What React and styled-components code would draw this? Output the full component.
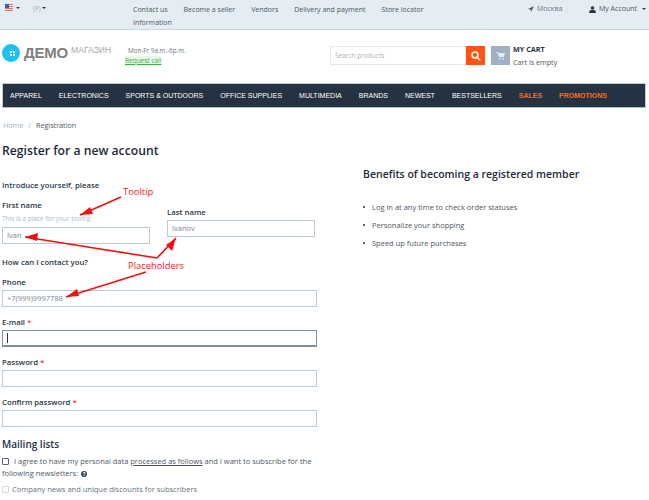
import React from "react"
import styled, { createGlobalStyle } from "styled-components"

const Global = createGlobalStyle`
html, body { margin: 0; padding: 0; background: #fff; overflow: hidden; }
body { font-family: "Open Sans", "Liberation Sans", sans-serif; color: #2a3644; width: 649px; height: 500px; }
* { box-sizing: border-box; }
`

const Page = styled.div`
position: relative;
width: 649px;
height: 500px;
overflow: hidden;
`
const TopBar = styled.div`
height: 30px;
background: #e4edf3;
border-bottom: 1px solid #c6d6e4;
display: flex;
font-size: 7px;
color: #4c5763;
`
const TopLeft = styled.div`
width: 133px;
display: flex;
align-items: flex-start;
padding: 4px 0 0 5px;
`
const Flag = styled.svg`
width: 8px;
height: 7px;
margin-top: 0;
`
const Caret = styled.span`
display: inline-block;
width: 0;
height: 0;
margin: ${p => p.$m || "3px 0 0 3px"};
border-left: 2px solid transparent;
border-right: 2px solid transparent;
border-top: 2px solid #2a3644;
`
const Currency = styled.span`
margin-left: 13px;
color: #a6afb9;
font-size: 6.5px;
line-height: 9px;
`
const TopLinks = styled.div`
width: 300px;
display: flex;
flex-wrap: wrap;
column-gap: 16px;
padding-top: 4px;
line-height: 11px;
white-space: nowrap;
`
const TopRight = styled.div`
flex: 1;
display: flex;
padding: 3px 0 0 95px;
line-height: 12px;
white-space: nowrap;
`
const City = styled.span`
display: flex;
align-items: center;
height: 12px;
gap: 3px;
width: 61px;
color: #6b7682;
`
const Account = styled.span`
display: flex;
align-items: center;
height: 12px;
gap: 3px;
`
const Header = styled.div`
height: 53px;
display: flex;
align-items: flex-start;
`
const Logo = styled.div`
width: 125px;
display: flex;
padding: 14px 0 0 2px;
`
const LogoBig = styled.span`
font-family: "Liberation Sans", sans-serif;
font-weight: 700;
font-size: 15px;
line-height: 18px;
color: #808080;
margin-left: 4px;
letter-spacing: -0.2px;
`
const LogoSmall = styled.span`
font-family: "Liberation Sans", sans-serif;
font-size: 8.6px;
line-height: 12px;
color: #a5a5a5;
margin-left: 3px;
`
const Hours = styled.div`
width: 205px;
padding-top: 16px;
font-size: 6.3px;
line-height: 10px;
color: #6b7682;
`
const HoursText = styled.div`
padding-left: 3px;
margin-bottom: 0;
`
const CallLink = styled.a`
color: #37b34a;
text-decoration: underline;
display: inline-block;
background: #e8f8e4;
font-size: 6.5px;
margin-top: 0;
`
const Search = styled.div`
margin-top: 16px;
width: 155px;
height: 19px;
display: flex;
`
const SearchInput = styled.div`
flex: 1;
border: 1px solid #e2eaf1;
font-size: 6.5px;
line-height: 17px;
padding-left: 4px;
color: #a8b2bc;
`
const SearchButton = styled.div`
width: 19px;
background: #ff5316;
display: flex;
align-items: center;
justify-content: center;
`
const Cart = styled.div`
margin-left: 6px;
margin-top: 16px;
display: flex;
gap: 3px;
`
const CartIcon = styled.div`
width: 19px;
height: 19px;
background: #9fb1c2;
display: flex;
align-items: center;
justify-content: center;
`
const CartText = styled.div`
font-size: 7.2px;
line-height: 13px;
color: #4c5763;
margin-top: -3px;
b { display: block; color: #2a3644; font-weight: 700; }
`
const Nav = styled.div`
margin: 0 3px 0 2px;
height: 25px;
background: #253241;
border: 1px solid #c9ccd0;
border-bottom-color: #b5babf;
display: flex;
align-items: center;
padding-left: 7px;
gap: 17px;
font-family: "Liberation Sans", sans-serif;
font-size: 7px;
color: #fff;
white-space: nowrap;
`
const NavItem = styled.span`
color: ${p => (p.$hot ? "#f4701c" : "#fff")};
font-weight: ${p => (p.$hot ? 700 : 400)};
`
const Crumbs = styled.div`
padding: 11px 0 0 3px;
font-size: 7.2px;
line-height: 12px;
color: #4c5763;
span { color: #9db2c6; }
i { font-style: normal; color: #9db2c6; margin: 0 5px; }
`
const Columns = styled.div`
display: flex;
padding: 0 0 0 2px;
`
const FormCol = styled.div`
width: 361px;
`
const Title = styled.h1`
margin: 11px 0 0;
font-size: 12.2px;
line-height: 18px;
font-weight: 600;
color: #1e2a38;
`
const Section = styled.div`
font-size: 7.75px;
line-height: 12px;
font-weight: 600;
color: #2a3644;
margin-top: ${p => p.$top || 0}px;
`
const NameRow = styled.div`
display: flex;
gap: 17px;
margin-top: 8px;
`
const Field = styled.div`
width: ${p => p.$w || 315}px;
margin-top: ${p => p.$top || 0}px;
`
const Label = styled.div`
font-size: 7.75px;
line-height: 12px;
font-weight: 600;
color: #2a3644;
em { color: #e8443a; font-style: normal; margin-left: 2px; }
`
const Hint = styled.div`
font-size: 6.5px;
line-height: 10px;
color: #a9bbcb;
margin-top: 3px;
`
const Input = styled.div`
height: 17px;
margin-top: ${p => p.$top || 2}px;
border: 1px solid ${p => (p.$focus ? "#7d8fa1" : "#bccbdb")};
border-bottom-width: ${p => (p.$focus ? 2 : 1)}px;
font-size: 7.5px;
line-height: 15px;
padding-left: 4px;
color: #7c8590;
display: flex;
align-items: center;
`
const CaretLine = styled.span`
width: 1px;
height: 10px;
background: #2a3644;
margin-left: 0;
`
const MailTitle = styled.h2`
margin: 9px 0 0;
font-size: 10px;
line-height: 16px;
font-weight: 600;
color: #1e2f45;
`
const Agree = styled.div`
margin-top: 4px;
width: 316px;
font-size: 7.5px;
line-height: 11.5px;
color: #4c5763;
u { text-underline-offset: 1px; }
`
const Check = styled.span`
display: inline-block;
width: 7px;
height: 7px;
border: 1px solid ${p => (p.$off ? "#d5d9dd" : "#5a6470")};
border-radius: 1px;
margin-right: ${p => p.$gap || 5}px;
vertical-align: -1px;
`
const Qmark = styled.span`
display: inline-block;
width: 6px;
height: 6px;
border-radius: 50%;
background: #3a4654;
color: #fff;
font-size: 5px;
line-height: 6px;
font-weight: 700;
text-align: center;
margin-left: 1px;
`
const Newsletter = styled.div`
margin-top: 4px;
font-size: 7.5px;
line-height: 12px;
color: #69737e;
`
const SideCol = styled.div`
padding-top: 35px;
`
const SideTitle = styled.h3`
margin: 0;
font-size: 10.5px;
line-height: 16px;
font-weight: 600;
color: #1e2a38;
`
const Benefits = styled.ul`
margin: 19px 0 0;
padding: 0;
list-style: none;
font-size: 7.5px;
color: #4c5763;
`
const Benefit = styled.li`
height: 18px;
line-height: 12px;
padding-left: 9px;
position: relative;
&::before {
    content: "";
    position: absolute;
    left: 0;
    top: 5px;
    width: 2px;
    height: 2px;
    border-radius: 50%;
    background: #2a3644;
}
`
const Note = styled.span`
position: absolute;
font-size: 9.4px;
line-height: 12px;
color: #f01c1c;
left: ${p => p.$x}px;
top: ${p => p.$y}px;
`
const Arrows = styled.svg`
position: absolute;
left: 0;
top: 0;
width: 649px;
height: 500px;
pointer-events: none;
`

const topLinks = ["Contact us", "Become a seller", "Vendors", "Delivery and payment", "Store locator", "Information"]
const navItems = ["APPAREL", "ELECTRONICS", "SPORTS & OUTDOORS", "OFFICE SUPPLIES", "MULTIMEDIA", "BRANDS", "NEWEST", "BESTSELLERS"]
const benefits = ["Log in at any time to check order statuses", "Personalize your shopping", "Speed up future purchases"]

const arrowLines = [
    { from: "121,197", to: "80,215", head: "80,215 90,207 93,214" },
    { from: "157,258", to: "25,237", head: "25,237 38,233 37,241" },
    { from: "157,258", to: "176,238", head: "176,238 172,251 166,245" },
    { from: "146,272", to: "66,297", head: "66,297 77,289 79,296" },
]

export default function App() {
    return (
        <Page>
            <Global />
            <TopBar>
                <TopLeft>
                    <Flag viewBox="0 0 8 7">
                        <rect width="8" height="7" fill="#d8737c" />
                        <rect y="1" width="8" height="1" fill="#f2e4e6" />
                        <rect y="3" width="8" height="1" fill="#f2e4e6" />
                        <rect y="5" width="8" height="1" fill="#f2e4e6" />
                        <rect width="4" height="4" fill="#4a5a9a" />
                    </Flag>
                    <Caret />
                    <Currency>(P)</Currency>
                    <Caret $m="3px 0 0 1px" />
                </TopLeft>
                <TopLinks>
                    {topLinks.map(l => <span key={l}>{l}</span>)}
                </TopLinks>
                <TopRight>
                    <City>
                        <svg width="6" height="6" viewBox="0 0 6 6"><path d="M6 0 L0 3 L2.6 3.4 L3 6 Z" fill="#4c5763" /></svg>
                        Москва
                    </City>
                    <Account>
                        <svg width="7" height="7" viewBox="0 0 7 7"><circle cx="3.5" cy="2" r="1.8" fill="#2a3644" /><path d="M0 7 C0 4.5 1.5 4 3.5 4 C5.5 4 7 4.5 7 7 Z" fill="#2a3644" /></svg>
                        My Account
                        <Caret $m="0 0 0 2px" />
                    </Account>
                </TopRight>
            </TopBar>
            <Header>
                <Logo>
                    <svg width="18" height="18" viewBox="0 0 18 18">
                        <circle cx="9" cy="9" r="9" fill="#1cc0f2" />
                        <rect x="8" y="7" width="2" height="2" fill="#fff" />
                        <rect x="11" y="7" width="2" height="2" fill="#fff" />
                        <rect x="8" y="10" width="2" height="2" fill="#fff" />
                        <rect x="11" y="10" width="2" height="2" fill="#fff" />
                    </svg>
                    <LogoBig>ДЕМО</LogoBig>
                    <LogoSmall>МАГАЗИН</LogoSmall>
                </Logo>
                <Hours>
                    <HoursText>Mon-Fr 9a.m.-6p.m.</HoursText>
                    <CallLink>Request call</CallLink>
                </Hours>
                <Search>
                    <SearchInput>Search products</SearchInput>
                    <SearchButton>
                        <svg width="10" height="10" viewBox="0 0 10 10" fill="none" stroke="#fff" strokeWidth="1.5"><circle cx="4" cy="4" r="2.9" /><path d="M6.2 6.2 L9.2 9.2" /></svg>
                    </SearchButton>
                </Search>
                <Cart>
                    <CartIcon>
                        <svg width="9" height="9" viewBox="0 0 9 9" fill="#e6edf3"><path d="M0 1 H2 L2.6 2 H9 L7.8 6 H3 L1.5 1.8 H0 Z" /><circle cx="3.6" cy="7.8" r="0.9" /><circle cx="7" cy="7.8" r="0.9" /></svg>
                    </CartIcon>
                    <CartText>
                        <b>MY CART</b>
                        Cart is empty
                    </CartText>
                </Cart>
            </Header>
            <Nav>
                {navItems.map(n => <NavItem key={n}>{n}</NavItem>)}
                <NavItem $hot>SALES</NavItem>
                <NavItem $hot>PROMOTIONS</NavItem>
            </Nav>
            <Crumbs><span>Home</span><i>/</i>Registration</Crumbs>
            <Columns>
                <FormCol>
                    <Title>Register for a new account</Title>
                    <Section $top={19}>Introduce yourself, please</Section>
                    <NameRow>
                        <Field $w={148}>
                            <Label>First name</Label>
                            <Hint>This is a place for your tooltip</Hint>
                            <Input $top={3}>Ivan</Input>
                        </Field>
                        <Field $w={148} $top={7}>
                            <Label>Last name</Label>
                            <Input>Ivanov</Input>
                        </Field>
                    </NameRow>
                    <Section $top={12}>How can I contact you?</Section>
                    <Field $top={8}>
                        <Label>Phone</Label>
                        <Input>+7(999)9997788</Input>
                    </Field>
                    <Field $top={9}>
                        <Label>E-mail<em>*</em></Label>
                        <Input $focus><CaretLine /></Input>
                    </Field>
                    <Field $top={9}>
                        <Label>Password<em>*</em></Label>
                        <Input />
                    </Field>
                    <Field $top={9}>
                        <Label>Confirm password<em>*</em></Label>
                        <Input />
                    </Field>
                    <MailTitle>Mailing lists</MailTitle>
                    <Agree>
                        <Check $gap={5} />I agree to have my personal data <u>processed as follows</u> and I want to subscribe for the following newsletters: <Qmark>?</Qmark>
                    </Agree>
                    <Newsletter><Check $off $gap={3} />Company news and unique discounts for subscribers</Newsletter>
                </FormCol>
                <SideCol>
                    <SideTitle>Benefits of becoming a registered member</SideTitle>
                    <Benefits>
                        {benefits.map(b => <Benefit key={b}>{b}</Benefit>)}
                    </Benefits>
                </SideCol>
            </Columns>
            <Note $x={123} $y={186}>Tooltip</Note>
            <Note $x={128} $y={260}>Placeholders</Note>
            <Arrows viewBox="0 0 649 500">
                {arrowLines.map(a => (
                    <g key={a.from + a.to}>
                        <polyline points={`${a.from} ${a.to}`} stroke="#f01010" strokeWidth="1.6" fill="none" />
                        <polygon points={a.head} fill="#f01010" />
                    </g>
                ))}
            </Arrows>
        </Page>
    )
}
